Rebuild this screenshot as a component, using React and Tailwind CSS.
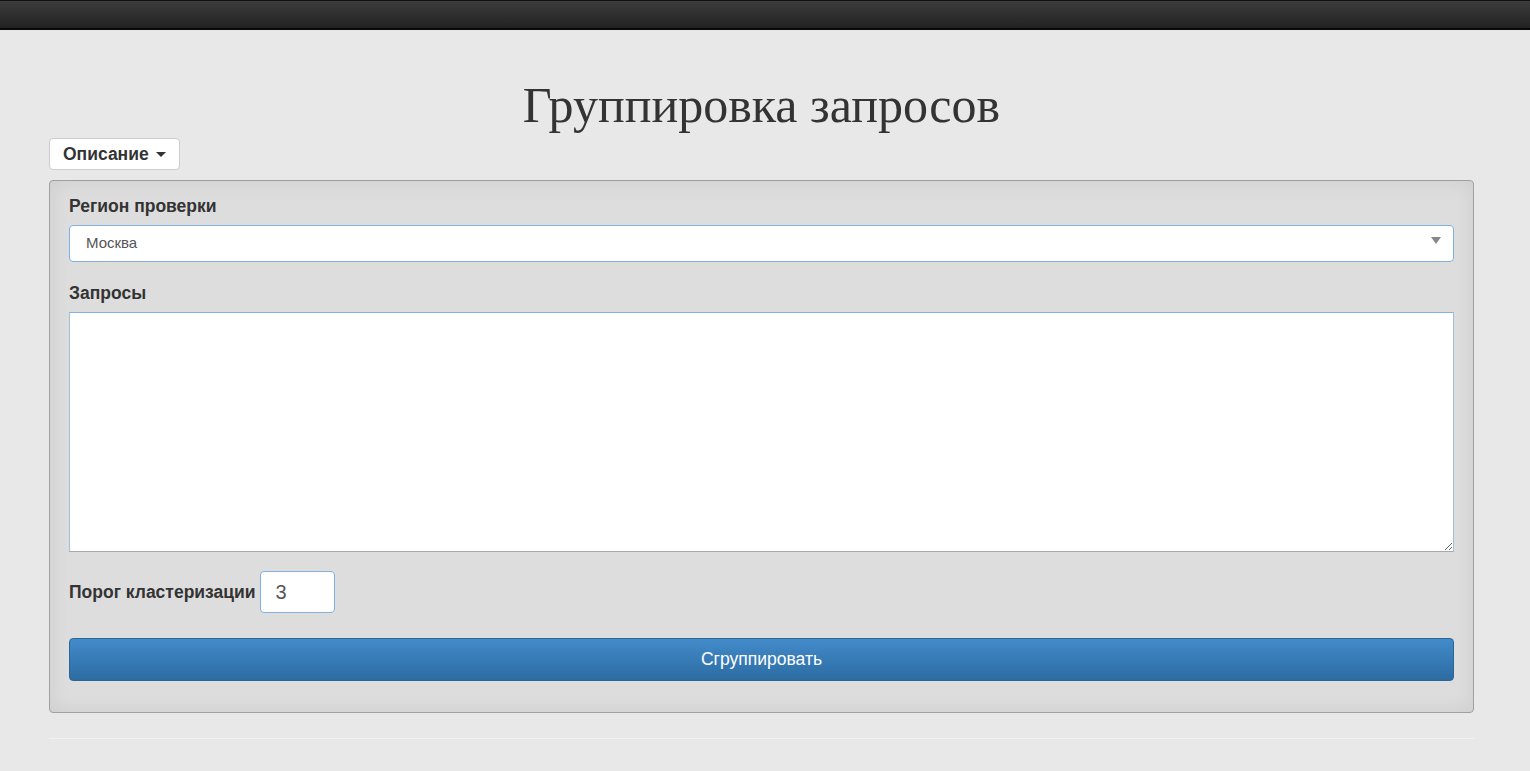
import React from 'react'

export default function App() {
  return (
    <div className="min-h-screen bg-[#e8e8e8] text-[#333]" style={{ fontFamily: '"Liberation Sans", Arial, sans-serif' }}>
      {/* navbar */}
      <div className="h-[30px] bg-gradient-to-b from-[#3c3c3c] to-[#222] border-t border-[#111] border-b-2 border-b-[#080808]" />

      <div className="ml-[49px] w-[1425px]">
        <h1
          className="text-center text-[50px] leading-none pt-[50px] text-[#333]"
          style={{ fontFamily: '"Liberation Serif", "Times New Roman", serif' }}
        >
          Группировка запросов
        </h1>

        <button className="mt-[8px] h-[32px] px-[13px] bg-white border border-[#ccc] rounded-[4px] flex items-center gap-[7px] text-[17.5px] font-bold text-[#333]">
          Описание
          <span className="w-0 h-0 border-l-[5px] border-r-[5px] border-t-[5px] border-l-transparent border-r-transparent border-t-[#333]" />
        </button>

        <div className="mt-[10px] bg-[#dddddd] border border-[#a0a0a0] rounded-[4px] px-[19px] pt-[14px] pb-[31px] shadow-[inset_0_0_20px_rgba(0,0,0,0.08)]">
          <label className="block text-[17.5px] font-bold leading-[22px]">Регион проверки</label>
          <div className="mt-[8px] h-[37px] bg-white border border-[#7fb2e0] rounded-[4px] flex items-center justify-between pl-[16px] pr-[12px]">
            <span className="text-[15px] text-[#555]">Москва</span>
            <span className="w-0 h-0 border-l-[5px] border-r-[5px] border-t-[7px] border-l-transparent border-r-transparent border-t-[#888] -mt-[6px]" />
          </div>

          <label className="block mt-[20px] text-[17.5px] font-bold leading-[22px]">Запросы</label>
          <textarea className="mt-[8px] block w-full h-[240px] bg-white border border-[#a9a9a9] border-t-[#7fb2e0] border-x-[#9fbfdc] outline-none resize-y" />

          <div className="mt-[19px] flex items-center gap-[4px]">
            <span className="text-[17.5px] font-bold">Порог кластеризации</span>
            <input
              defaultValue="3"
              className="w-[75px] h-[42px] bg-white border border-[#7fb2e0] rounded-[4px] px-[15px] text-[20px] text-[#555] outline-none"
            />
          </div>

          <button className="mt-[25px] w-full h-[43px] rounded-[4px] bg-gradient-to-b from-[#428bca] to-[#2d6ca2] border border-[#2b669a] text-white text-[17.5px]">
            Сгруппировать
          </button>
        </div>

        <div className="mt-[25px] border-t border-[#f2f2f2]" />
      </div>
    </div>
  )
}
